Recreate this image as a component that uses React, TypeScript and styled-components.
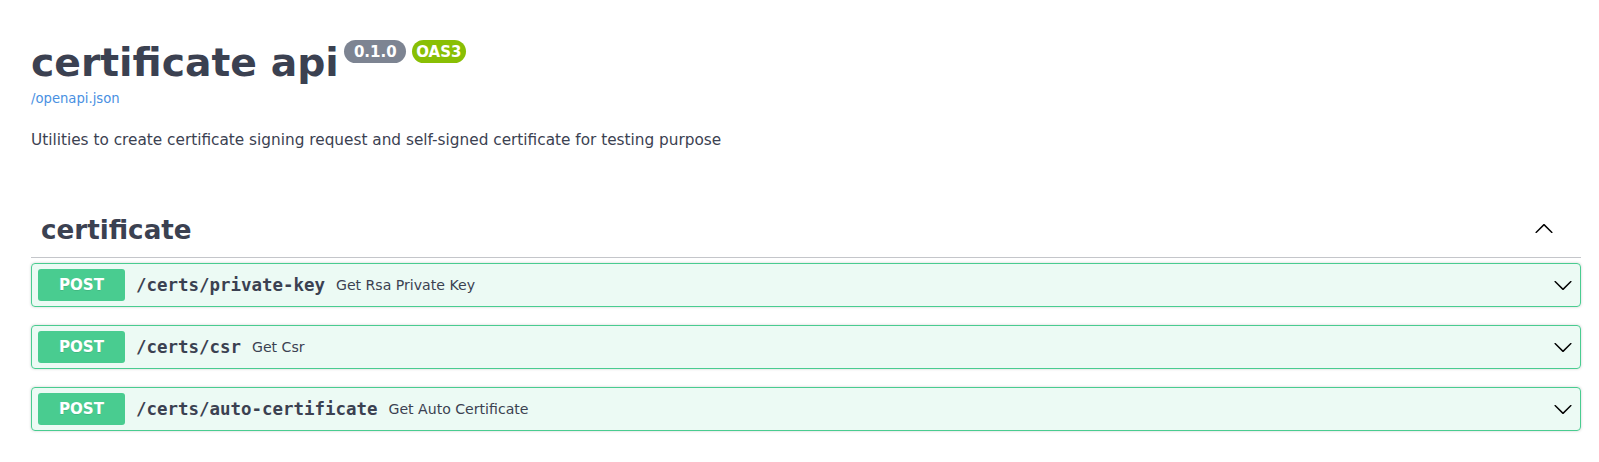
import React from "react";
import styled, { createGlobalStyle } from "styled-components";

const GlobalStyle = createGlobalStyle`
  html, body {
    margin: 0;
    padding: 0;
    background: #ffffff;
  }
  body {
    font-family: "DejaVu Sans", sans-serif;
    color: #3b4151;
  }
`;

const Page = styled.div`
  width: 1550px;
  padding: 40px 0 30px 31px;
`;

const Info = styled.section`
  display: flex;
  flex-direction: column;
  align-items: flex-start;
`;

const TitleRow = styled.div`
  display: flex;
  align-items: flex-start;
`;

const Title = styled.h2`
  margin: 0;
  font-family: "DejaVu Sans", sans-serif;
  font-size: 39.3px;
  font-weight: 700;
  line-height: 46px;
  color: #3b4151;
`;

const Badge = styled.span<{ $bg: string }>`
  margin: 0 0 0 5.4px;
  padding: 2.5px 4.5px;
  border-radius: 60px;
  background: ${(p) => p.$bg};
  color: #ffffff;
  font-family: "DejaVu Sans", sans-serif;
  font-size: 15px;
  font-weight: 700;
  line-height: 18px;
  white-space: pre;
`;

const SpecLink = styled.a`
  margin-top: 5px;
  font-family: "DejaVu Sans", sans-serif;
  font-size: 13.2px;
  line-height: 15px;
  color: #4990e2;
  text-decoration: none;
`;

const Description = styled.p`
  margin: 25px 0 0;
  font-family: "DejaVu Sans", sans-serif;
  font-size: 15.3px;
  line-height: 18px;
  color: #3b4151;
`;

const TagSection = styled.section`
  margin-top: 56px;
  display: flex;
  flex-direction: column;
`;

const TagHeader = styled.div`
  display: flex;
  align-items: flex-start;
  padding: 10px 27px 10px 10px;
  border-bottom: 1px solid rgba(59, 65, 81, 0.3);
  margin-bottom: 5px;
`;

const TagName = styled.h3`
  flex: 1;
  margin: -1px 0 1px;
  font-family: "DejaVu Sans", sans-serif;
  font-size: 26.2px;
  font-weight: 700;
  line-height: 32px;
  color: #3b4151;
`;

const ArrowIcon = styled.svg`
  width: 20px;
  height: 20px;
  flex: 0 0 auto;
  fill: #000000;
`;

const TagArrow = styled(ArrowIcon)`
  margin-top: 3px;
`;

const OpList = styled.div`
  display: flex;
  flex-direction: column;
  gap: 18px;
`;

const OpBlock = styled.div`
  border: 1px solid #49cc90;
  border-radius: 4px;
  background: rgba(73, 204, 144, 0.1);
  box-shadow: 0 0 3px rgba(0, 0, 0, 0.19);
`;

const OpSummary = styled.div`
  display: flex;
  align-items: center;
  padding: 5px 6px;
`;

const Method = styled.span`
  min-width: 87px;
  padding: 6px 0;
  border-radius: 3px;
  background: #49cc90;
  color: #ffffff;
  font-family: "DejaVu Sans", sans-serif;
  font-size: 15.1px;
  font-weight: 700;
  line-height: 20px;
  text-align: center;
  text-shadow: 0 1px 0 rgba(0, 0, 0, 0.1);
`;

const Path = styled.span`
  padding: 0 11px;
  font-family: "DejaVu Sans Mono", monospace;
  font-size: 17.45px;
  font-weight: 700;
  line-height: 20px;
  color: #3b4151;
`;

const Summary = styled.span`
  flex: 1;
  font-family: "DejaVu Sans", sans-serif;
  font-size: 14.1px;
  line-height: 20px;
  color: #3b4151;
`;

const DownArrow = styled(ArrowIcon)`
  margin-right: 1px;
`;

const ArrowUp = () => (
  <TagArrow viewBox="0 0 20 20" aria-hidden="true">
    <path d="M17.418 14.908c.272.268.709.268.979 0s.271-.701 0-.969l-7.908-7.83c-.27-.268-.707-.268-.979 0l-7.908 7.83c-.27.268-.27.701 0 .969.271.268.709.268.979 0L10 7.767l7.418 7.141z" />
  </TagArrow>
);

const ArrowDown = () => (
  <DownArrow viewBox="0 0 20 20" aria-hidden="true">
    <path d="M17.418 6.109c.272-.268.709-.268.979 0s.271.701 0 .969l-7.908 7.83c-.27.268-.707.268-.979 0l-7.908-7.83c-.27-.268-.27-.701 0-.969.271-.268.709-.268.979 0L10 13.25l7.418-7.141z" />
  </DownArrow>
);

const operations = [
  { method: "POST", path: "/certs/private-key", summary: "Get Rsa Private Key" },
  { method: "POST", path: "/certs/csr", summary: "Get Csr" },
  { method: "POST", path: "/certs/auto-certificate", summary: "Get Auto Certificate" },
];

export default function App() {
  return (
    <>
      <GlobalStyle />
      <Page>
        <Info>
          <TitleRow>
            <Title>certificate api</Title>
            <Badge $bg="#7d8492">{" 0.1.0 "}</Badge>
            <Badge $bg="#89bf04">OAS3</Badge>
          </TitleRow>
          <SpecLink href="#">/openapi.json</SpecLink>
          <Description>
            Utilities to create certificate signing request and self-signed certificate for testing purpose
          </Description>
        </Info>
        <TagSection>
          <TagHeader>
            <TagName>certificate</TagName>
            <ArrowUp />
          </TagHeader>
          <OpList>
            {operations.map((op) => (
              <OpBlock key={op.path}>
                <OpSummary>
                  <Method>{op.method}</Method>
                  <Path>{op.path}</Path>
                  <Summary>{op.summary}</Summary>
                  <ArrowDown />
                </OpSummary>
              </OpBlock>
            ))}
          </OpList>
        </TagSection>
      </Page>
    </>
  );
}
